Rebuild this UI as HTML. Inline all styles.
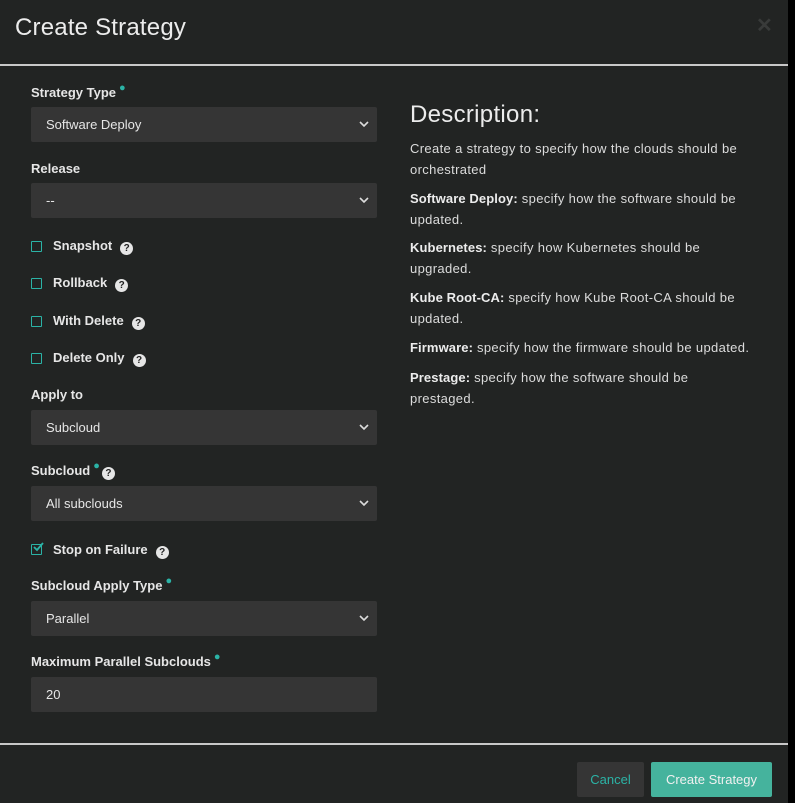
<!DOCTYPE html>
<html><head><style>
*{box-sizing:border-box;margin:0;padding:0}
body{width:795px;height:803px;background:#000;font-family:"Liberation Sans",sans-serif;position:relative;overflow:hidden;color:#e0e0e0}
.m{position:absolute;left:0;top:0;width:788px;height:803px;background:#222423}
.a{position:absolute}
.t{left:15px;top:14px;font-size:24px;color:#ececec;letter-spacing:0.2px}
.hr{left:0;width:788px;height:2px;background:#c8c8c8}
.lb{font-size:13px;font-weight:bold;color:#e6e6e6;left:31px}
.req{color:#2bb3a6;font-size:11px;position:relative;top:-6px;margin-left:3px}
.sel{left:31px;width:346px;height:35px;background:#353535;border-radius:2px;font-size:13px;color:#e6e6e6;padding:10px 15px}
.sel svg{position:absolute;right:8px;top:14px}
.cb{left:31px;width:11px;height:11px;border:1.5px solid #2bb3a6;border-radius:1px}
.q{display:inline-block;width:13px;height:13px;border-radius:50%;background:#e6e6e6;color:#222;font-size:10px;line-height:13px;text-align:center;font-weight:bold;margin-left:8px;vertical-align:-1px}
.ck{left:53px;font-size:13px;font-weight:bold;color:#e6e6e6}
.d{left:410px;white-space:nowrap;font-size:13px;line-height:21px;color:#dcdcdc;letter-spacing:0.35px}
.d b{color:#ececec;letter-spacing:0.1px}
</style></head><body>
<div class="m">
<div class="a t">Create Strategy</div>
<div class="a" style="left:756px;top:13px;font-size:20px;color:#393b3a;font-weight:bold">✕</div>
<div class="a hr" style="top:64px"></div>

<div class="a lb" style="top:85px">Strategy Type<span class="req">●</span></div>
<div class="a sel" style="top:107px">Software Deploy<svg width="10" height="7" viewBox="0 0 10 7"><path d="M1 1l4 4 4-4" stroke="#ddd" stroke-width="1.6" fill="none"/></svg></div>
<div class="a lb" style="top:161px">Release</div>
<div class="a sel" style="top:183px">--<svg width="10" height="7" viewBox="0 0 10 7"><path d="M1 1l4 4 4-4" stroke="#ddd" stroke-width="1.6" fill="none"/></svg></div>

<div class="a cb" style="top:241px"></div><div class="a ck" style="top:238px">Snapshot<span class="q">?</span></div>
<div class="a cb" style="top:278px"></div><div class="a ck" style="top:275px">Rollback<span class="q">?</span></div>
<div class="a cb" style="top:316px"></div><div class="a ck" style="top:313px">With Delete<span class="q">?</span></div>
<div class="a cb" style="top:353px"></div><div class="a ck" style="top:350px">Delete Only<span class="q">?</span></div>

<div class="a lb" style="top:387px">Apply to</div>
<div class="a sel" style="top:410px">Subcloud<svg width="10" height="7" viewBox="0 0 10 7"><path d="M1 1l4 4 4-4" stroke="#ddd" stroke-width="1.6" fill="none"/></svg></div>
<div class="a lb" style="top:463px">Subcloud<span class="req">●</span><span class="q" style="margin-left:2px">?</span></div>
<div class="a sel" style="top:486px">All subclouds<svg width="10" height="7" viewBox="0 0 10 7"><path d="M1 1l4 4 4-4" stroke="#ddd" stroke-width="1.6" fill="none"/></svg></div>

<div class="a cb" style="top:544px"></div>
<svg class="a" style="left:32px;top:542px" width="12" height="11" viewBox="0 0 12 11"><path d="M2 5l3 3 6-7" stroke="#2bb3a6" stroke-width="1.8" fill="none"/></svg>
<div class="a ck" style="top:542px">Stop on Failure<span class="q">?</span></div>

<div class="a lb" style="top:578px">Subcloud Apply Type<span class="req">●</span></div>
<div class="a sel" style="top:601px">Parallel<svg width="10" height="7" viewBox="0 0 10 7"><path d="M1 1l4 4 4-4" stroke="#ddd" stroke-width="1.6" fill="none"/></svg></div>
<div class="a lb" style="top:654px">Maximum Parallel Subclouds<span class="req">●</span></div>
<div class="a sel" style="top:677px">20</div>

<div class="a" style="left:410px;top:101px;font-size:24px;color:#ececec;letter-spacing:0.3px">Description:</div>
<div class="a d" style="top:138px">Create a strategy to specify how the clouds should be<br>orchestrated</div>
<div class="a d" style="top:188px"><b>Software Deploy:</b> specify how the software should be<br>updated.</div>
<div class="a d" style="top:237px"><b>Kubernetes:</b> specify how Kubernetes should be<br>upgraded.</div>
<div class="a d" style="top:287px"><b>Kube Root-CA:</b> specify how Kube Root-CA should be<br>updated.</div>
<div class="a d" style="top:337px"><b>Firmware:</b> specify how the firmware should be updated.</div>
<div class="a d" style="top:367px"><b>Prestage:</b> specify how the software should be<br>prestaged.</div>

<div class="a hr" style="top:743px"></div>
<div class="a" style="left:577px;top:762px;width:67px;height:35px;background:#353535;border-radius:2px;color:#2bb3a6;font-size:13px;text-align:center;line-height:35px">Cancel</div>
<div class="a" style="left:651px;top:762px;width:121px;height:35px;background:#45b39d;border-radius:2px;color:#f0f0f0;font-size:13px;text-align:center;line-height:35px">Create Strategy</div>
</div>
</body></html>
